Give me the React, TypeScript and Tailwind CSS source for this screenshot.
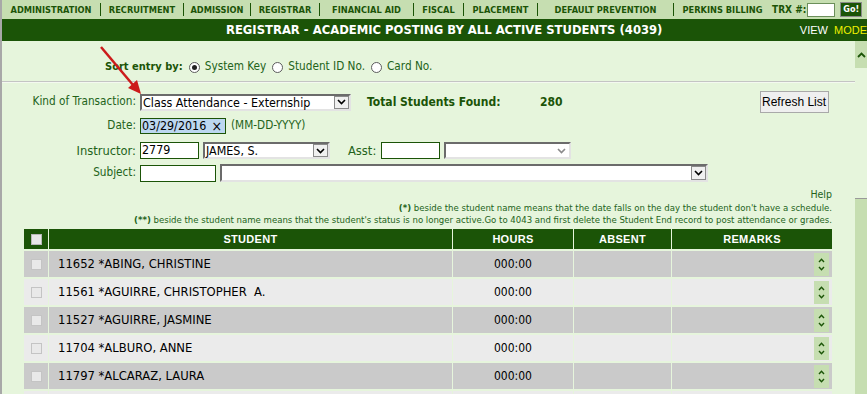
import React from "react";

const navItems: [string, number][] = [
  ["ADMINISTRATION", 98],
  ["RECRUITMENT", 82],
  ["ADMISSION", 66],
  ["REGISTRAR", 68],
  ["FINANCIAL AID", 93],
  ["FISCAL", 49],
  ["PLACEMENT", 73],
  ["DEFAULT PREVENTION", 135],
  ["PERKINS BILLING", 97],
];

const students = [
  ["11652", "*ABING, CHRISTINE"],
  ["11561", "*AGUIRRE, CHRISTOPHER  A."],
  ["11527", "*AGUIRRE, JASMINE"],
  ["11704", "*ALBURO, ANNE"],
  ["11797", "*ALCARAZ, LAURA"],
  ["", ""],
];

function Chevron({ color = "#000" }: { color?: string }) {
  return (
    <svg width="9" height="6" viewBox="0 0 9 6">
      <polyline points="1,1 4.5,4.5 8,1" fill="none" stroke={color} strokeWidth="1.6" />
    </svg>
  );
}

function Select({ w, h = 17, text, box = true, disabled = false }: { w: number; h?: number; text?: string; box?: boolean; disabled?: boolean }) {
  return (
    <div
      className="flex items-center bg-white border-t-2 border-l-2 border-[#6b6b6b] border-r-2 border-b-2 border-r-[#e3e3e3] border-b-[#e3e3e3] box-border"
      style={{ width: w, height: h }}
    >
      <span className="flex-1 min-w-0 pl-[1px] text-[12.4px] text-black whitespace-nowrap leading-[13px]">{text}</span>
      {box ? (
        <span className="h-full w-[15px] flex items-center justify-center bg-[#f0f0f0] border border-[#8a8a8a]">
          <Chevron />
        </span>
      ) : (
        <span className="h-full w-[15px] flex items-center justify-center">
          <Chevron color={disabled ? "#8a8a8a" : "#000"} />
        </span>
      )}
    </div>
  );
}

function Radio({ checked = false }: { checked?: boolean }) {
  return (
    <span className="w-[11px] h-[11px] rounded-full border border-[#5c5c5c] bg-white flex items-center justify-center">
      {checked && <span className="w-[5px] h-[5px] rounded-full bg-[#222]" />}
    </span>
  );
}

function Spinner() {
  return (
    <span className="w-[15px] h-[23px] bg-[#c6deb1] flex flex-col items-center justify-center gap-[3px]">
      <svg width="7" height="5" viewBox="0 0 7 5"><polyline points="1,4 3.5,1.2 6,4" fill="none" stroke="#1b5407" strokeWidth="1.4" /></svg>
      <svg width="7" height="5" viewBox="0 0 7 5"><polyline points="1,1 3.5,3.8 6,1" fill="none" stroke="#1b5407" strokeWidth="1.4" /></svg>
    </span>
  );
}

export default function App() {
  const cols = "grid grid-cols-[24px_403px_120px_97px_160px] gap-x-px";
  return (
    <div className="relative w-[867px] h-[394px] overflow-hidden bg-[#e6f5dc] border-l-2 border-[#a8a8a8] font-['DejaVu_Sans_Condensed','DejaVu_Sans',sans-serif]">
      {/* top menu */}
      <div className="h-[19px] bg-[#c6deb1] flex items-center text-[#1b5407] font-bold text-[9.2px] whitespace-nowrap">
        {navItems.map(([label, w], i) => (
          <React.Fragment key={label}>
            {i > 0 && <span className="w-px h-[13px] bg-[#1b5407]" />}
            <span className="text-center" style={{ width: w }}>{label}</span>
          </React.Fragment>
        ))}
        <span className="pl-[1px] text-[10px]">TRX #:</span>
        <span className="ml-[1px] w-[28px] h-[14px] bg-white border border-[#6b8f5a]" />
        <span className="ml-[5px] w-[22px] h-[15px] bg-[#1b5407] border border-[#8a8a8a] text-white text-[9px] flex items-center justify-center">Go!</span>
      </div>

      {/* title */}
      <div className="h-[22px] bg-[#1b5407] flex items-center text-white font-bold whitespace-nowrap">
        <span className="w-[806px] pl-[224px] text-[12.9px]">REGISTRAR - ACADEMIC POSTING BY ALL ACTIVE STUDENTS (4039)</span>
        <span className="text-[11px] font-normal font-['Liberation_Sans',sans-serif]">
          VIEW <span className="ml-[3px] text-[#f0f000]">MODE</span>
        </span>
      </div>

      <div className="flex">
        <div className="w-[853px] text-[#23631a] text-[11.7px]">
          {/* sort entry */}
          <div className="mt-[16px] h-[20px] pl-[103px] flex items-center gap-[6px]">
            <span className="font-bold text-[#1b5407] text-[11px]">Sort entry by:</span>
            <Radio checked />
            <span className="-ml-[1px]">System Key</span>
            <Radio />
            <span className="-ml-[1px]">Student ID No.</span>
            <Radio />
            <span className="-ml-[1px]">Card No.</span>
          </div>
          <div className="mt-[4px] border-t border-[#c4c4c4] border-b border-b-[#f4f9f0]" />

          {/* kind */}
          <div className="mt-[8px] h-[22px] flex items-center">
            <span className="w-[134px] text-right">Kind of Transaction:</span>
            <span className="ml-[4px]"><Select w={211} text="Class Attendance - Externship" /></span>
            <span className="ml-[16px] w-[173px] font-bold text-[#1b5407] text-[12px]">Total Students Found:</span>
            <span className="font-bold text-[#1b5407] text-[12px]">280</span>
            <span className="ml-[197px] w-[69px] h-[22px] bg-[#efefef] border border-[#a9a9a9] text-black text-[12px] font-['Liberation_Sans',sans-serif] flex items-center justify-center">
              Refresh List
            </span>
          </div>

          {/* date */}
          <div className="mt-[5px] h-[16px] flex items-center">
            <span className="w-[134px] text-right">Date:</span>
            <span className="ml-[4px] w-[86px] h-[16px] bg-[#bcd7f0] border border-[#1b5407] flex items-center justify-between px-[1px] text-[12.4px] text-black">
              03/29/2016<span className="mr-[2px] text-[14px] leading-none">×</span>
            </span>
            <span className="ml-[5px]">(MM-DD-YYYY)</span>
          </div>

          {/* instructor */}
          <div className="mt-[8px] h-[17px] flex items-center">
            <span className="w-[134px] text-right text-[12.8px]">Instructor:</span>
            <span className="ml-[4px] w-[59px] h-[17px] bg-white border border-[#1b5407] text-[12.4px] text-black flex items-center pl-[1px]">2779</span>
            <span className="ml-[4px]"><Select w={127} text="JAMES, S." /></span>
            <span className="ml-[18px] w-[33px] text-[12.8px]">Asst:</span>
            <span className="w-[59px] h-[17px] bg-white border border-[#1b5407]" />
            <span className="ml-[4px]"><Select w={127} box={false} disabled /></span>
          </div>

          {/* subject */}
          <div className="mt-[5px] h-[18px] flex items-center">
            <span className="w-[134px] text-right">Subject:</span>
            <span className="ml-[4px] w-[76px] h-[17px] bg-white border border-[#1b5407]" />
            <span className="ml-[4px]"><Select w={488} h={18} /></span>
          </div>

          {/* help + notes */}
          <div className="mt-[6px] pr-[23px] text-right text-[9.5px] leading-[12px]">
            <div className="text-[10.5px]">Help</div>
            <div className="mt-[2px]"><b>(*)</b> beside the student name means that the date falls on the day the student don't have a schedule.</div>
            <div><b>(**)</b> beside the student name means that the student's status is no longer active.Go to 4043 and first delete the Student End record to post attendance or grades.</div>
          </div>

          {/* table */}
          <div className="mt-[3px] ml-[22px] w-[808px]">
            <div className={`${cols} h-[20px] text-white font-bold text-[11px] font-['Liberation_Sans',sans-serif] tracking-[0.3px]`}>
              <div className="bg-[#1b5407] flex items-center justify-center">
                <span className="w-[11px] h-[11px] bg-[#e8e8e8] border border-[#b8b8b8]" />
              </div>
              <div className="bg-[#1b5407] flex items-center justify-center">STUDENT</div>
              <div className="bg-[#1b5407] flex items-center justify-center">HOURS</div>
              <div className="bg-[#1b5407] flex items-center justify-center">ABSENT</div>
              <div className="bg-[#1b5407] flex items-center justify-center">REMARKS</div>
            </div>
            {students.map(([id, name], i) => {
              const bg = i % 2 === 0 ? "bg-[#cacaca]" : "bg-[#ebebeb]";
              const empty = id === "";
              return (
                <div key={i} className={`${cols} h-[26px] mt-[2px] text-[12px] text-black`}>
                  <div className={`${bg} flex items-center justify-center`}>
                    {!empty && <span className="w-[11px] h-[11px] bg-[#e9e9e9] border border-[#c4c4c4]" />}
                  </div>
                  <div className={`${bg} flex items-center pl-[9px] whitespace-pre text-[12.9px]`}>{empty ? "" : `${id} ${name}`}</div>
                  <div className={`${bg} flex items-center justify-center`}>{empty ? "" : "000:00"}</div>
                  <div className={bg} />
                  <div className={`${bg} flex items-center justify-end pr-[3px]`}>
                    {!empty && <Spinner />}
                  </div>
                </div>
              );
            })}
          </div>
        </div>

        {/* scrollbar */}
        <div className="w-[12px] h-[353px] flex flex-col">
          <div className="h-[27px] bg-[#c6deb1] flex items-center justify-center">
            <svg width="9" height="6" viewBox="0 0 9 6"><polyline points="1,5 4.5,1.5 8,5" fill="none" stroke="#1b5407" strokeWidth="1.8" /></svg>
          </div>
          <div className="h-[130px]" />
          <div className="flex-1 bg-[#c6deb1] border-t border-[#9a9a9a]" />
        </div>
      </div>

      {/* red arrow annotation */}
      <svg className="absolute left-[-2px] top-0 pointer-events-none" width="200" height="120" viewBox="0 0 200 120">
        <line x1="101" y1="47" x2="133" y2="85" stroke="#cc1b1b" strokeWidth="2.5" />
        <polygon points="141,94 128,88 137,80" fill="#cc1b1b" />
      </svg>
    </div>
  );
}
